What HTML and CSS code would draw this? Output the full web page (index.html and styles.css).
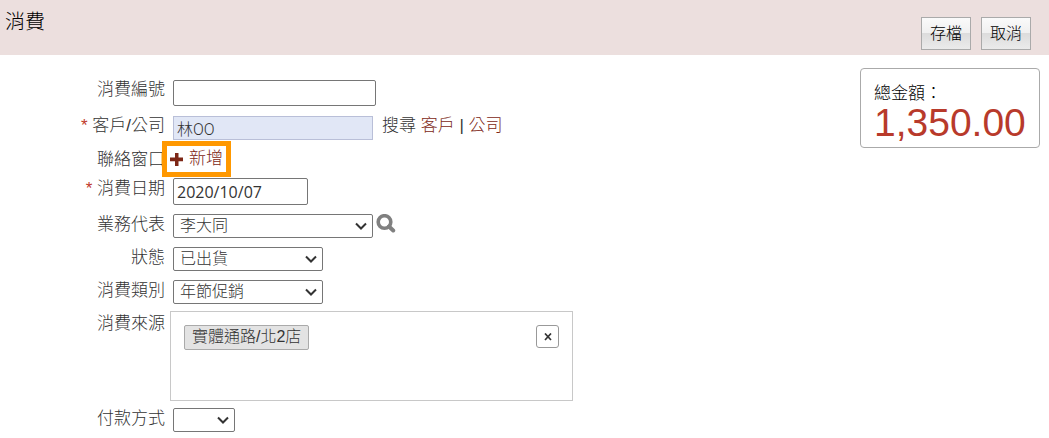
FILE: index.html
```html
<!DOCTYPE html>
<html lang="zh-Hant">
<head>
    <meta charset="UTF-8">
    <meta name="viewport" content="width=device-width, initial-scale=1.0">
    <title>消費</title>
    <link rel="stylesheet" href="styles.css">
</head>
<body>
    <header class="topbar">
        <h1>消費</h1>
        <div class="actions">
            <button type="submit" form="saleForm">存檔</button>
            <button type="button">取消</button>
        </div>
    </header>
    <main class="content">
        <form id="saleForm" class="form">
            <div class="row">
                <label for="saleNo">消費編號</label>
                <input type="text" id="saleNo" class="sale-no">
            </div>
            <div class="row">
                <label for="customer"><span class="required">*</span> 客戶/公司</label>
                <input type="text" id="customer" class="customer" value="林OO" readonly>
                <span class="search">搜尋 <a href="#">客戶</a> | <a href="#">公司</a></span>
            </div>
            <div class="row">
                <span class="label">聯絡窗口</span>
                <a href="#" class="add">
                    <svg width="13" height="13" viewBox="0 0 13 13" aria-hidden="true"><path d="M5 0h3.5v4.6H13v3.6H8.500V13H5V8.200H0V4.600h5z" fill="#7d2716"/></svg>
                    新增
                </a>
            </div>
            <div class="row">
                <label for="saleDate"><span class="required">*</span> 消費日期</label>
                <input type="text" id="saleDate" class="sale-date" value="2020/10/07">
            </div>
            <div class="row">
                <label for="agent">業務代表</label>
                <select id="agent" class="agent">
                    <option>李大同</option>
                </select>
                <button type="button" class="lookup" aria-label="搜尋業務代表">
                    <svg width="20" height="20" viewBox="0 0 20 20"><circle cx="8.500" cy="8" r="6.300" fill="none" stroke="#808080" stroke-width="3.600"/><path d="M13 12.500l4.200 4" stroke="#808080" stroke-width="4" stroke-linecap="round"/></svg>
                </button>
            </div>
            <div class="row">
                <label for="status">狀態</label>
                <select id="status">
                    <option>已出貨</option>
                </select>
            </div>
            <div class="row">
                <label for="category">消費類別</label>
                <select id="category">
                    <option>年節促銷</option>
                </select>
            </div>
            <div class="row">
                <span class="label">消費來源</span>
                <div class="source">
                    <span class="tag">實體通路/北2店</span>
                    <button type="button" class="clear" aria-label="清除">
                        <svg width="8" height="8" viewBox="0 0 8 8"><path d="M1 0.500l6 6.500M7 0.500L1 7" stroke="#333" stroke-width="1.700"/></svg>
                    </button>
                </div>
            </div>
            <div class="row">
                <label for="payment">付款方式</label>
                <select id="payment" class="payment">
                    <option></option>
                </select>
            </div>
        </form>
        <aside class="total">
            <div>總金額：</div>
            <div class="amount">1,350.00</div>
        </aside>
    </main>
</body>
</html>
```
FILE: styles.css
```css
* {
    box-sizing: border-box;
}
body {
    margin: 0;
    background: #fff;
    color: #333;
    font: 300 17px/22px "Liberation Sans", "Noto Sans CJK TC", sans-serif;
}
a {
    color: #7d2716;
    text-decoration: none;
}
input, select, button {
    margin: 0;
    font: inherit;
    font-size: 16px;
    color: #333;
}
.topbar {
    display: flex;
    justify-content: space-between;
    height: 55px;
    padding: 0 18px 0 5px;
    background: #ecdfde;
}
h1 {
    margin: 12px 0 0;
    font-size: 20px;
    font-weight: 300;
    line-height: 20px;
    color: #000;
}
.actions {
    display: flex;
    gap: 10px;
    padding: 17px 0 5px;
}
.actions button {
    width: 50px;
    padding: 0;
    border: 1px solid #aaa;
    background: linear-gradient(#fafafa 0%, #f0f0f0 48%, #dcdcdc 50%, #ebebeb 100%);
    color: #000;
}
.content {
    display: flex;
    align-items: flex-start;
    justify-content: space-between;
    padding: 13px 9px 0 0;
}
.form {
    display: flex;
    flex-direction: column;
    gap: 9px;
    padding: 11px 0 6px;
}
.row {
    display: flex;
    align-items: flex-start;
}
.row label, .label {
    width: 165px;
    margin-right: 8px;
    text-align: right;
}
.required {
    color: #c0392b;
}
input {
    height: 26px;
    margin-top: 1px;
    padding: 0 3px;
    border: 1px solid #767676;
    border-radius: 2px;
}
.sale-no {
    width: 203px;
}
.customer {
    width: 200px;
    height: 24px;
    border-color: #b9bfd8;
    border-radius: 0;
    background: #e1e7f6;
    font-family: Roboto, "Noto Sans CJK TC", sans-serif;
}
.search {
    margin-left: 9px;
}
.add {
    position: relative;
    display: flex;
    align-items: center;
    gap: 6px;
    height: 20px;
    margin-left: -3px;
}
/* highlight frame */
.add::after {
    content: "";
    position: absolute;
    inset: -8px;
    border: 5px solid #ff9800;
}
.row:nth-child(3) {
    height: 20px;
}
.sale-date {
    width: 135px;
    height: 27px;
    margin-top: 0;
    font-family: "Open Sans", "Noto Sans", sans-serif;
    font-weight: 400;
}
select {
    width: 150px;
    height: 24px;
    padding: 0 6px;
    border: 1px solid #767676;
    border-radius: 2px;
    appearance: none;
    background: #fff url("data:image/svg+xml,%3Csvg xmlns='http://www.w3.org/2000/svg' width='12' height='8'%3E%3Cpath d='M1 1.500l5 5 5-5' fill='none' stroke='%23333' stroke-width='2'/%3E%3C/svg%3E") no-repeat right 5px center;
}
.agent {
    width: 200px;
}
.payment {
    width: 62px;
}
.lookup {
    height: 20px;
    padding: 0;
    border: 0;
    margin-left: 3px;
    background: none;
    line-height: 20px;
}
.source {
    display: flex;
    justify-content: space-between;
    align-items: flex-start;
    width: 403px;
    height: 90px;
    margin: -2px 0 -2px -3px;
    padding: 13px;
    border: 1px solid #c8c8c8;
}
.tag {
    padding: 0 7px 1px;
    border: 1px solid #aaa;
    border-radius: 2px;
    background: #e3e3e3;
    font-size: 16px;
}
.clear {
    display: flex;
    align-items: center;
    justify-content: center;
    width: 23px;
    height: 23px;
    padding: 0;
    border: 1px solid #999;
    border-radius: 3px;
    background: #fff;
}
.total {
    width: 180px;
    height: 80px;
    padding: 14px 0 0 13px;
    border: 1px solid #aaa;
    border-radius: 4px;
    color: #000;
}
.amount {
    color: #b83a2b;
    font-size: 39px;
    line-height: 36px;
}
```
